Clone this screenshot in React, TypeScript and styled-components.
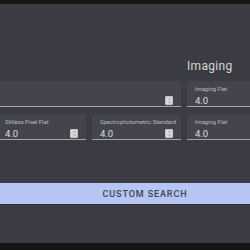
import React from "react";
import styled, { createGlobalStyle } from "styled-components";

const GlobalStyle = createGlobalStyle`
  html, body {
    margin: 0;
    padding: 0;
    background: #141414;
    overflow: hidden;
  }
  * {
    box-sizing: border-box;
  }
`;

const Page = styled.div`
  width: 250px;
  height: 250px;
  display: flex;
  flex-direction: column;
  overflow: hidden;
  font-family: Roboto, "Liberation Sans", sans-serif;
`;

const TopBar = styled.div`
  height: 4px;
  background: #161616;
  flex: none;
`;

const Panel = styled.div`
  height: 239px;
  flex: none;
  background: #3b3c43;
  padding-top: 55px;
  display: flex;
  flex-direction: column;
`;

const Grid = styled.div`
  margin-left: -3px;
  display: grid;
  grid-template-columns: repeat(3, 89px);
  column-gap: 6px;
  row-gap: 7px;
`;

const SectionTitle = styled.div`
  grid-column: 3;
  font-size: 12px;
  color: #d6d6da;
  letter-spacing: 0.3px;
  line-height: 14px;
  margin-bottom: 1px;
`;

const Field = styled.div<{ $span?: number }>`
  grid-column: span ${(p) => p.$span ?? 1};
  height: 26px;
  background: #44454c;
  border-radius: 3px 3px 0 0;
  border-bottom: 1px solid #a4a5a9;
  padding: 5px 8px 0 8px;
  display: flex;
  flex-direction: column;
`;

const Label = styled.div`
  font-size: 5.8px;
  line-height: 7px;
  color: #b9bac0;
  white-space: nowrap;
  height: 7px;
`;

const ValueRow = styled.div`
  display: flex;
  align-items: center;
  justify-content: space-between;
  height: 12px;
  margin-top: 1px;
`;

const Value = styled.span`
  font-size: 9.5px;
  color: #dcdcdf;
`;

const Spinner = styled.span`
  width: 8px;
  height: 9px;
  background: #d9d9dc;
  border: 1px solid #c4c4c8;
  border-radius: 1px;
  display: flex;
  align-items: center;
  justify-content: center;
  margin-top: 1px;
`;

const SearchButton = styled.button`
  margin-top: 43px;
  height: 21px;
  width: 100%;
  border: none;
  border-radius: 0;
  background: #b6c5f3;
  box-shadow: 0 1px 0 #2c2d33;
  color: #40434f;
  font-family: Roboto, "Liberation Sans", sans-serif;
  font-size: 9px;
  font-weight: 500;
  letter-spacing: 0.9px;
  padding: 0 0 0 40px;
  text-align: center;
`;

const SpinIcon = () => (
  <svg width="5" height="7" viewBox="0 0 5 7">
    <path d="M1 2.6 L2.5 1.2 L4 2.6" fill="none" stroke="#8a8b90" strokeWidth="0.7" />
    <path d="M1 4.4 L2.5 5.8 L4 4.4" fill="none" stroke="#8a8b90" strokeWidth="0.7" />
  </svg>
);

type NumberFieldProps = {
  label?: string;
  value?: string;
  span?: number;
  spinner?: boolean;
};

const NumberField: React.FC<NumberFieldProps> = ({ label, value, span, spinner }) => (
  <Field $span={span}>
    <Label>{label}</Label>
    <ValueRow>
      <Value>{value}</Value>
      {spinner && (
        <Spinner>
          <SpinIcon />
        </Spinner>
      )}
    </ValueRow>
  </Field>
);

const App: React.FC = () => {
  return (
    <>
      <GlobalStyle />
      <Page>
        <TopBar />
        <Panel>
          <Grid>
            <SectionTitle>Imaging</SectionTitle>
            <NumberField span={2} spinner />
            <NumberField label="Imaging Flat" value="4.0" />
            <NumberField label="Slitless Pixel Flat" value="4.0" spinner />
            <NumberField label="Spectrophotometric Standard" value="4.0" spinner />
            <NumberField label="Imaging Flat" value="4.0" />
          </Grid>
          <SearchButton>CUSTOM SEARCH</SearchButton>
        </Panel>
      </Page>
    </>
  );
};

export default App;
